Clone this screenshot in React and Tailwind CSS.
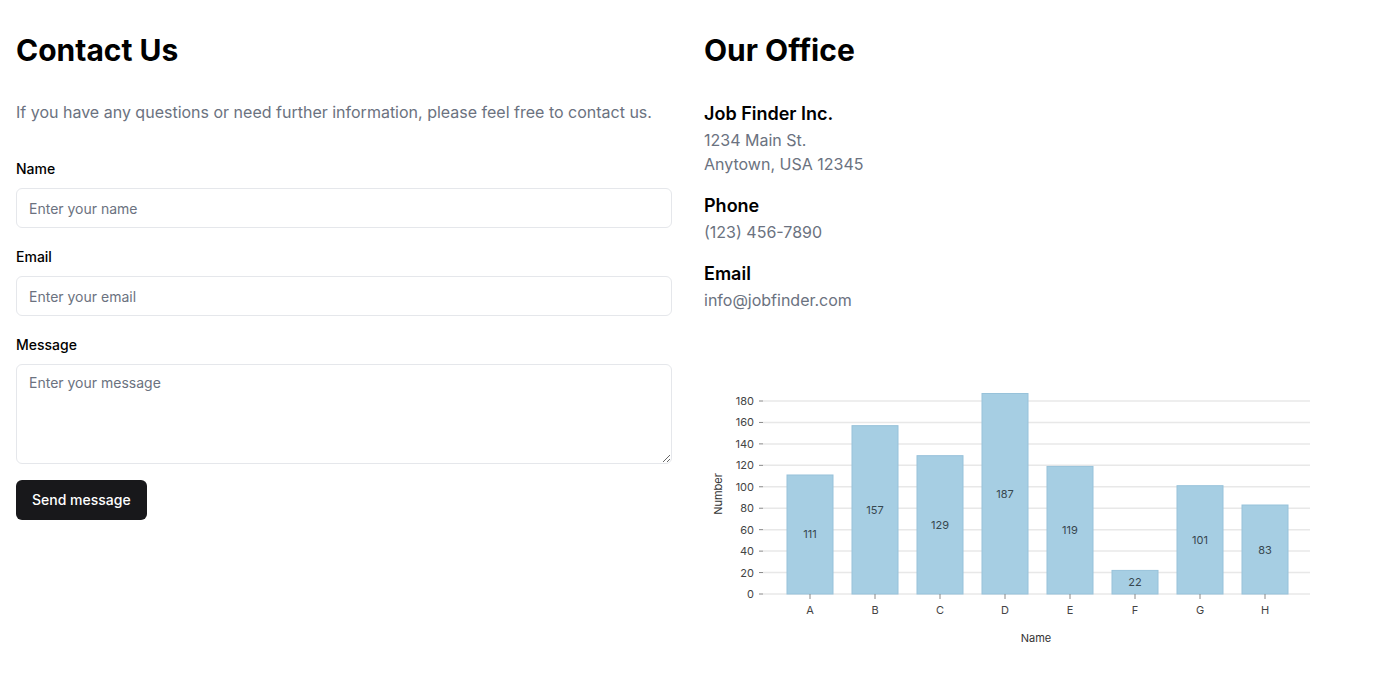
import React from 'react';

const data = [
  { name: 'A', value: 111 },
  { name: 'B', value: 157 },
  { name: 'C', value: 129 },
  { name: 'D', value: 187 },
  { name: 'E', value: 119 },
  { name: 'F', value: 22 },
  { name: 'G', value: 101 },
  { name: 'H', value: 83 },
];

const ticks = [0, 20, 40, 60, 80, 100, 120, 140, 160, 180];
const base = 224;
const scale = 193 / 180;
const yOf = (v) => base - v * scale;

function BarChart() {
  return (
    <svg width="656" height="300" className="block" style={{ fontFamily: 'Inter, sans-serif' }}>
      {ticks.map((t) => (
        <g key={t}>
          <line x1="59" x2="606" y1={yOf(t)} y2={yOf(t)} stroke="#e8e8e8" strokeWidth="1.5" />
          <line x1="55" x2="59" y1={yOf(t)} y2={yOf(t)} stroke="#888" strokeWidth="1" />
          <text x="50" y={yOf(t) + 4} textAnchor="end" fontSize="11" fill="#444">{t}</text>
        </g>
      ))}
      {data.map((d, i) => {
        const cx = 106 + i * 65;
        const top = yOf(d.value);
        return (
          <g key={d.name}>
            <rect x={cx - 23} y={top} width="46" height={base - top} fill="#a6cee3" stroke="#97c2da" strokeWidth="1" />
            <text x={cx} y={(top + base) / 2 + 4} textAnchor="middle" fontSize="11" fill="#37474f">{d.value}</text>
            <line x1={cx} x2={cx} y1={base} y2={base + 5} stroke="#888" strokeWidth="1" />
            <text x={cx} y={base + 20} textAnchor="middle" fontSize="11" fill="#444">{d.name}</text>
          </g>
        );
      })}
      <text x="332" y="272" textAnchor="middle" fontSize="11" fill="#333">Name</text>
      <text x="0" y="0" transform="translate(18 124) rotate(-90)" textAnchor="middle" fontSize="11" fill="#333">Number</text>
    </svg>
  );
}

export default function App() {
  return (
    <div className="bg-white min-h-[676px] px-4 py-8 font-['Inter',sans-serif] text-black">
      <div className="grid grid-cols-2 gap-8">
        <div>
          <h1 className="text-3xl font-bold leading-9">Contact Us</h1>
          <p className="mt-8 text-base leading-6 text-[#6b7280]">If you have any questions or need further information, please feel free to contact us.</p>
          <form className="mt-[35px] flex flex-col">
            <label className="block text-sm font-medium leading-5 mb-[9px]">Name</label>
            <input type="text" placeholder="Enter your name" className="h-10 w-full rounded-md border border-[#e5e7eb] px-3 text-sm placeholder:text-[#6b7280] focus:outline-none" />
            <label className="block text-sm font-medium leading-5 mt-[19px] mb-[9px]">Email</label>
            <input type="email" placeholder="Enter your email" className="h-10 w-full rounded-md border border-[#e5e7eb] px-3 text-sm placeholder:text-[#6b7280] focus:outline-none" />
            <label className="block text-sm font-medium leading-5 mt-[19px] mb-[9px]">Message</label>
            <textarea placeholder="Enter your message" className="h-[100px] w-full rounded-md border border-[#e5e7eb] px-3 py-2 text-sm placeholder:text-[#6b7280] focus:outline-none" />
            <div className="mt-4">
              <button type="button" className="h-10 rounded-md bg-[#18181b] px-4 text-sm font-medium text-white">Send message</button>
            </div>
          </form>
        </div>
        <div>
          <h2 className="text-3xl font-bold leading-9">Our Office</h2>
          <div className="mt-8 flex flex-col gap-4">
            <div>
              <h3 className="text-lg font-semibold leading-7">Job Finder Inc.</h3>
              <p className="text-base leading-6 text-[#6b7280]">1234 Main St.</p>
              <p className="text-base leading-6 text-[#6b7280]">Anytown, USA 12345</p>
            </div>
            <div>
              <h3 className="text-lg font-semibold leading-7">Phone</h3>
              <p className="text-base leading-6 text-[#6b7280]">(123) 456-7890</p>
            </div>
            <div>
              <h3 className="text-lg font-semibold leading-7">Email</h3>
              <p className="text-base leading-6 text-[#6b7280]">info@jobfinder.com</p>
            </div>
          </div>
          <div className="mt-[58px]">
            <BarChart />
          </div>
        </div>
      </div>
    </div>
  );
}
